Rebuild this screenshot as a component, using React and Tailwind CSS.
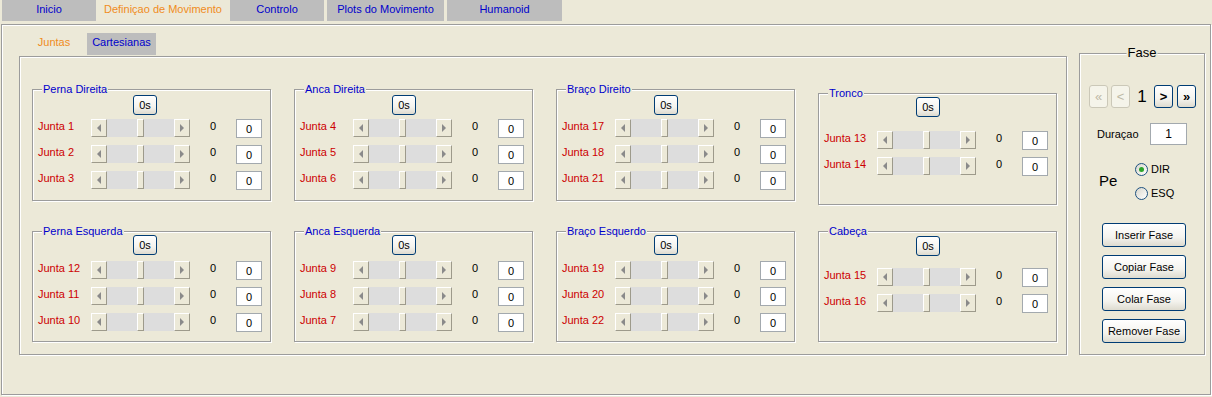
import React from 'react';

const raised =
  'bg-[#ece9d8] border border-t-white border-l-white border-r-[#9d9a8b] border-b-[#9d9a8b]';

const etched = 'border border-[#9c9c9c] shadow-[inset_1px_1px_0_#fff,1px_1px_0_#fff]';

const xpBtn =
  'rounded-[3px] border border-[#003c74] bg-[linear-gradient(#ffffff,#f4f3ee_60%,#dedbcf)] text-black';

const ScrollBar = () => (
  <div className="flex w-[99px] h-[18px] shrink-0">
    <div className={`w-[16px] h-full flex items-center justify-center ${raised}`}>
      <div className="w-0 h-0 border-y-[4px] border-y-transparent border-r-[4px] border-r-[#8a8a8a]" />
    </div>
    <div className="flex-1 bg-[#dddddd]" />
    <div className={`w-[7px] h-full ${raised}`} />
    <div className="flex-1 bg-[#dddddd]" />
    <div className={`w-[16px] h-full flex items-center justify-center ${raised}`}>
      <div className="w-0 h-0 border-y-[4px] border-y-transparent border-l-[4px] border-l-[#8a8a8a]" />
    </div>
  </div>
);

const JointRow = ({ name }) => (
  <div className="flex items-center h-[18px]">
    <span className="w-[53px] shrink-0 text-[#cc0000] mb-[4px]">{name}</span>
    <ScrollBar />
    <span className="w-[46px] shrink-0 pl-[20px] mb-[4px]">0</span>
    <div className="w-[26px] h-[19px] bg-white border border-[#a3a9ae] flex items-center justify-center pt-[2px]">
      0
    </div>
  </div>
);

const Group = ({ title, joints, box, btn, rows }) => (
  <div className={`relative w-[239px] shrink-0 pl-[5px] ${etched} ${box}`}>
    <span className="absolute -top-[8px] left-[9px] px-[1px] bg-[#ece9d8] text-[#0000cc] leading-[14px]">
      {title}
    </span>
    <div className={btn}>
      <button className={`w-[24px] h-[20px] ${xpBtn}`}>0s</button>
    </div>
    <div className={`flex flex-col gap-[8px] ${rows}`}>
      {joints.map(j => (
        <JointRow key={j} name={j} />
      ))}
    </div>
  </div>
);

const NavBtn = ({ label, disabled }) => (
  <button
    className={
      disabled
        ? 'w-[19px] h-[23px] rounded-[3px] border border-[#cbc8b8] bg-[#f5f4ea] text-[#bdb9a6] text-[13px] leading-none'
        : `w-[19px] h-[23px] text-[13px] font-bold leading-none ${xpBtn}`
    }
  >
    {label}
  </button>
);

const Radio = ({ checked, label }) => (
  <div className="flex items-center gap-[3px] h-[13px]">
    <div className="w-[13px] h-[13px] rounded-full border border-[#1c5180] bg-[linear-gradient(135deg,#d8d6cc,#ffffff)] flex items-center justify-center">
      {checked && <div className="w-[5px] h-[5px] rounded-full bg-[#2ba42b]" />}
    </div>
    <span>{label}</span>
  </div>
);

const topTabs = [
  { label: 'Inicio', w: 'w-[94px]', sel: false },
  { label: 'Definiçao de Movimento', w: 'w-[128px]', sel: true },
  { label: 'Controlo', w: 'w-[94px]', sel: false },
  { label: 'Plots do Movimento', w: 'w-[117px]', sel: false },
  { label: 'Humanoid', w: 'w-[115px]', sel: false },
];

const App = () => {
  return (
    <div className="w-[1212px] h-[397px] bg-[#ece9d8] font-['Liberation_Sans',Arial,sans-serif] text-[11px] text-black overflow-hidden">
      {/* top tabs */}
      <div className="flex h-[21px] pl-[2px] gap-[3px]">
        {topTabs.map(t => (
          <div
            key={t.label}
            className={`${t.w} h-full text-center pt-[1px] ${
              t.sel ? 'text-[#f08c1c]' : 'bg-[#bdbdbd] text-[#0000cc]'
            }`}
          >
            {t.label}
          </div>
        ))}
      </div>

      {/* main panel */}
      <div className={`ml-[1px] mt-[3px] w-[1210px] h-[371px] flex ${etched}`}>
        <div className="ml-[17px] mt-[8px] flex flex-col">
          <div className="flex h-[22px] ml-[2px]">
            <div className="w-[66px] text-center text-[#f08c1c] pt-[1px]">Juntas</div>
            <div className="w-[69px] text-center bg-[#bdbdbd] text-[#0000cc] pt-[1px]">Cartesianas</div>
          </div>
          <div className={`mt-[1px] w-[1048px] h-[299px] pl-[12px] pt-[32px] ${etched}`}>
            <div className="flex items-start gap-[23px]">
              <Group title="Perna Direita" joints={['Junta 1', 'Junta 2', 'Junta 3']} box="h-[112px] pt-[5px]" btn="ml-[95px]" rows="mt-[4px]" />
              <Group title="Anca Direita" joints={['Junta 4', 'Junta 5', 'Junta 6']} box="h-[112px] pt-[5px]" btn="ml-[92px]" rows="mt-[4px]" />
              <Group title="Braço Direito" joints={['Junta 17', 'Junta 18', 'Junta 21']} box="h-[112px] pt-[5px]" btn="ml-[92px]" rows="mt-[4px]" />
              <Group title="Tronco" joints={['Junta 13', 'Junta 14']} box="h-[112px] mt-[4px] pt-[3px]" btn="ml-[92px]" rows="mt-[14px]" />
            </div>
            <div className="flex items-start gap-[23px] mt-[26px]">
              <Group title="Perna Esquerda" joints={['Junta 12', 'Junta 11', 'Junta 10']} box="h-[111px] pt-[3px]" btn="ml-[95px]" rows="mt-[6px]" />
              <Group title="Anca Esquerda" joints={['Junta 9', 'Junta 8', 'Junta 7']} box="h-[111px] pt-[3px]" btn="ml-[92px]" rows="mt-[6px]" />
              <Group title="Braço Esquerdo" joints={['Junta 19', 'Junta 20', 'Junta 22']} box="h-[111px] pt-[3px]" btn="ml-[92px]" rows="mt-[6px]" />
              <Group title="Cabeça" joints={['Junta 15', 'Junta 16']} box="h-[111px] pt-[4px]" btn="ml-[92px]" rows="mt-[12px]" />
            </div>
          </div>
        </div>

        {/* Fase */}
        <div className={`relative ml-[12px] mt-[28px] w-[126px] h-[302px] flex flex-col ${etched}`}>
          <span className="absolute -top-[9px] left-1/2 -translate-x-1/2 px-[1px] bg-[#ece9d8] text-[13px] leading-[16px]">
            Fase
          </span>
          <div className="flex items-center mt-[31px] ml-[9px]">
            <NavBtn label="«" disabled />
            <div className="w-[3px]" />
            <NavBtn label="<" disabled />
            <span className="w-[24px] text-center text-[17px] leading-none">1</span>
            <NavBtn label=">" />
            <div className="w-[4px]" />
            <NavBtn label="»" />
          </div>
          <div className="flex items-center mt-[15px] ml-[17px]">
            <span className="w-[53px]">Duraçao</span>
            <div className="w-[37px] h-[22px] bg-white border border-[#a3a9ae] flex items-center justify-center text-[12px]">
              1
            </div>
          </div>
          <div className="flex items-center mt-[18px] ml-[19px]">
            <span className="w-[36px] text-[15px]">Pe</span>
            <div className="flex flex-col gap-[11px]">
              <Radio checked label="DIR" />
              <Radio label="ESQ" />
            </div>
          </div>
          <div className="flex flex-col gap-[8px] mt-[23px] ml-[22px]">
            {['Inserir Fase', 'Copiar Fase', 'Colar Fase', 'Remover Fase'].map(b => (
              <button key={b} className={`w-[84px] h-[24px] ${xpBtn}`}>
                {b}
              </button>
            ))}
          </div>
        </div>
      </div>
    </div>
  );
};

export default App;
